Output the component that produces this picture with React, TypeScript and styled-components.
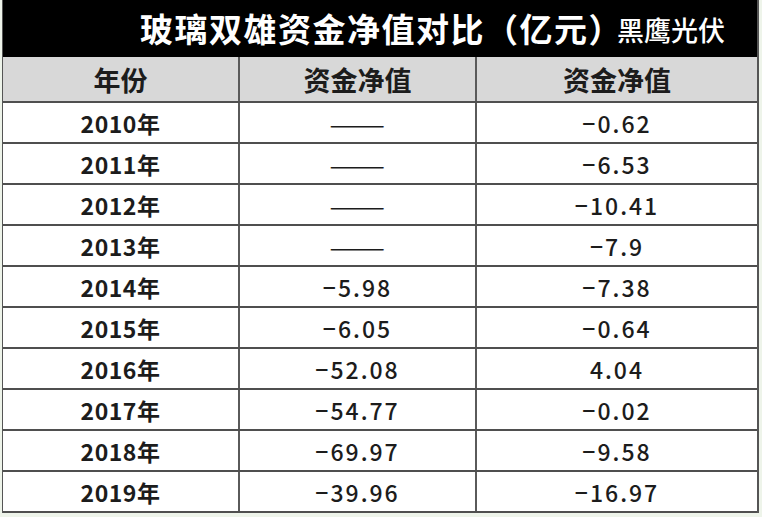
import React from 'react';
import styled, { createGlobalStyle } from 'styled-components';

const GlobalStyle = createGlobalStyle`
  html, body {
    margin: 0;
    padding: 0;
    background: #eef4ea;
  }
  * {
    box-sizing: border-box;
  }
`;

const Page = styled.div`
  width: 762px;
  height: 517px;
  padding: 0 3px 0 2px;
  background: #eef4ea;
  font-family: "Noto Sans CJK SC", "Noto Sans", sans-serif;
  color: #1c1c1c;
`;

const Table = styled.div`
  width: 757px;
  background: #fff;
  border-left: 1px solid #555;
  border-right: 2px solid #555;
`;

const TitleBar = styled.div`
  height: 57px;
  background: #000;
  color: #fff;
  display: flex;
  align-items: center;
  justify-content: flex-end;
  padding: 0 32px 2px 0;
  white-space: nowrap;
`;

const Title = styled.span`
  font-size: 33px;
  font-weight: 700;
  letter-spacing: 1.5px;
`;

const Brand = styled.span`
  font-size: 27px;
  font-weight: 500;
  margin-left: -6px;
  padding-top: 3px;
`;

const Row = styled.div<{ $head?: boolean }>`
  display: grid;
  grid-template-columns: 237px 237px 1fr;
  height: ${(p) => (p.$head ? 46 : 41)}px;
  background: ${(p) => (p.$head ? '#d8d8d8' : '#fff')};
  border-bottom: 2px solid #4f4f4f;
`;

const Cell = styled.div<{ $head?: boolean; $year?: boolean }>`
  display: flex;
  align-items: center;
  justify-content: center;
  border-right: 2px solid #5a5a5a;
  font-size: ${(p) => (p.$head ? 27 : 23)}px;
  font-weight: ${(p) => (p.$head || p.$year ? 700 : 500)};
  letter-spacing: ${(p) => (p.$head ? 0 : p.$year ? 0.5 : 2)}px;
  padding-top: 1px;

  &:last-child {
    border-right: none;
  }
`;

const Dash = styled.span`
  display: inline-block;
  font-weight: 400;
  letter-spacing: 0;
  transform: scaleX(1.45);
`;

const rows: [string, string, string][] = [
  ['2010年', '——', '−0.62'],
  ['2011年', '——', '−6.53'],
  ['2012年', '——', '−10.41'],
  ['2013年', '——', '−7.9'],
  ['2014年', '−5.98', '−7.38'],
  ['2015年', '−6.05', '−0.64'],
  ['2016年', '−52.08', '4.04'],
  ['2017年', '−54.77', '−0.02'],
  ['2018年', '−69.97', '−9.58'],
  ['2019年', '−39.96', '−16.97'],
];

const renderValue = (v: string) => (v === '——' ? <Dash>{v}</Dash> : v);

const App: React.FC = () => {
  return (
    <Page>
      <GlobalStyle />
      <Table>
        <TitleBar>
          <Title>玻璃双雄资金净值对比（亿元）</Title>
          <Brand>黑鹰光伏</Brand>
        </TitleBar>
        <Row $head>
          <Cell $head>年份</Cell>
          <Cell $head>资金净值</Cell>
          <Cell $head>资金净值</Cell>
        </Row>
        {rows.map(([year, a, b]) => (
          <Row key={year}>
            <Cell $year>{year}</Cell>
            <Cell>{renderValue(a)}</Cell>
            <Cell>{renderValue(b)}</Cell>
          </Row>
        ))}
      </Table>
    </Page>
  );
};

export default App;
